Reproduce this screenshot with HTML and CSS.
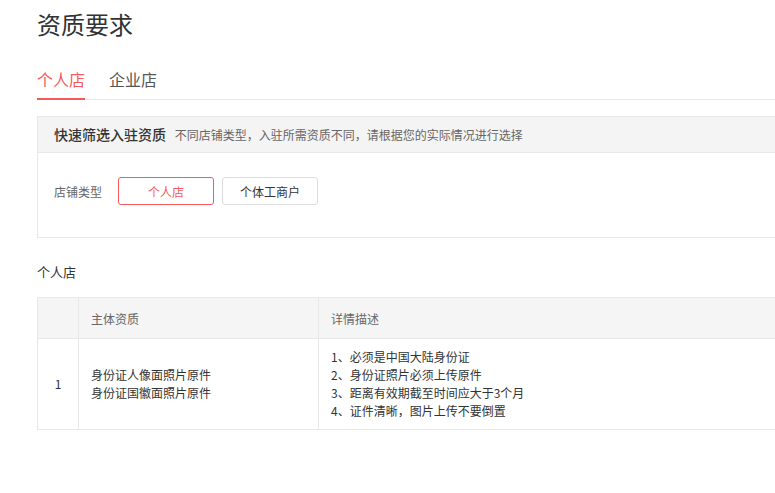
FILE: index.html
```html
<!DOCTYPE html>
<html lang="zh-CN">
<head>
  <meta charset="UTF-8" />
  <title>资质要求</title>
  <link rel="stylesheet" href="styles.css">
</head>
<body>
  <div class="page">
    <h1 class="title">资质要求</h1>

    <div class="tabs">
      <span class="tab active">个人店</span>
      <span class="tab">企业店</span>
    </div>

    <div class="filter">
      <div class="filter-head">
        <strong>快速筛选入驻资质</strong>
        <span>不同店铺类型，入驻所需资质不同，请根据您的实际情况进行选择</span>
      </div>
      <div class="filter-body">
        <span class="filter-label">店铺类型</span>
        <button class="opt selected">个人店</button>
        <button class="opt">个体工商户</button>
      </div>
    </div>

    <div class="section-title">个人店</div>

    <table class="req">
      <thead>
        <tr>
          <th class="num"></th>
          <th class="subject">主体资质</th>
          <th>详情描述</th>
        </tr>
      </thead>
      <tbody>
        <tr>
          <td class="num">1</td>
          <td class="subject">身份证人像面照片原件<br>身份证国徽面照片原件</td>
          <td>1、必须是中国大陆身份证<br>2、身份证照片必须上传原件<br>3、距离有效期截至时间应大于3个月<br>4、证件清晰，图片上传不要倒置</td>
        </tr>
      </tbody>
    </table>
  </div>
</body>
</html>
```

FILE: styles.css
```css
html, body {
  overflow: hidden;
}
body {
  margin: 0;
  font-family: "Noto Sans CJK SC", "Microsoft YaHei", sans-serif;
  color: #333;
  background: #fff;
}
.page {
  width: 1000px;
  padding: 0 0 40px 37px;
}
.title {
  margin: 0;
  padding-top: 7px;
  font-size: 24px;
  font-weight: normal;
  line-height: 33px;
  color: #333;
}
.tabs {
  display: flex;
  gap: 24px;
  margin-top: 28px;
  border-bottom: 1px solid #e8e8e8;
}
.tab {
  font-size: 16px;
  line-height: 22px;
  padding-bottom: 8px;
  color: #555;
  margin-bottom: -1px;
  border-bottom: 2px solid transparent;
}
.tab.active {
  color: #f55a5a;
  border-bottom-color: #f55a5a;
}
.filter {
  margin-top: 16px;
  border: 1px solid #e8e8e8;
}
.filter-head {
  background: #f4f4f4;
  border-bottom: 1px solid #e8e8e8;
  padding: 0 16px;
  height: 35px;
  line-height: 35px;
  font-size: 12px;
  color: #666;
}
.filter-head strong {
  font-size: 14px;
  font-weight: 500;
  color: #333;
  margin-right: 6px;
}
.filter-body {
  display: flex;
  align-items: center;
  padding: 24px 16px 32px;
  font-size: 12px;
}
.filter-label {
  color: #666;
  margin-right: 16px;
}
.opt {
  width: 96px;
  height: 28px;
  margin-right: 8px;
  border: 1px solid #ddd;
  border-radius: 3px;
  background: #fff;
  font-family: inherit;
  font-size: 12px;
  color: #333;
  padding: 0;
}
.opt.selected {
  border-color: #f55a5a;
  color: #f55a5a;
}
.section-title {
  margin-top: 25px;
  font-size: 13px;
  line-height: 18px;
}
.req {
  margin-top: 16px;
  width: 100%;
  border-collapse: collapse;
  font-size: 12px;
}
.req th, .req td {
  border: 1px solid #e8e8e8;
  text-align: left;
  padding: 0 12px;
}
.req th {
  background: #f5f5f5;
  font-weight: normal;
  color: #666;
  height: 40px;
}
.req td {
  height: 90px;
  line-height: 18px;
  color: #333;
}
.req .num {
  width: 16px;
  text-align: center;
  color: #333;
}
.req .subject {
  width: 215px;
}
```
